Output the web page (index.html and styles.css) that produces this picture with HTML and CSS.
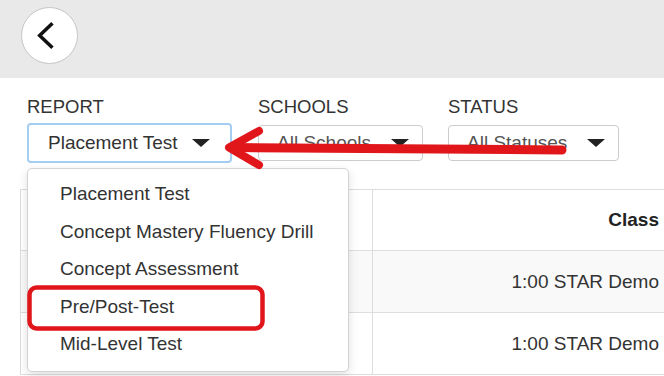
FILE: index.html
```html
<!DOCTYPE html>
<html lang="en">
<head>
    <meta charset="UTF-8">
    <title>Reports</title>
    <link rel="stylesheet" href="styles.css">
</head>
<body>
    <div class="top-bar">
        <button class="back-btn" aria-label="Back">
            <svg width="56" height="56" viewBox="0 0 56 56">
                <polyline points="31,15 18,27.5 31,40" fill="none" stroke="#111" stroke-width="3.6" stroke-linejoin="miter" stroke-linecap="butt"/>
            </svg>
        </button>
    </div>

    <div class="filters">
        <div class="filter filter-report">
            <div class="filter-label">REPORT</div>
            <div class="select select-open">
                <span>Placement Test</span>
                <i class="caret"></i>
            </div>
            <ul class="menu">
                <li>Placement Test</li>
                <li>Concept Mastery Fluency Drill</li>
                <li>Concept Assessment</li>
                <li>Pre/Post-Test</li>
                <li>Mid-Level Test</li>
            </ul>
        </div>
        <div class="filter filter-schools">
            <div class="filter-label">SCHOOLS</div>
            <div class="select">
                <span>All Schools</span>
                <i class="caret"></i>
            </div>
        </div>
        <div class="filter filter-status">
            <div class="filter-label">STATUS</div>
            <div class="select">
                <span>All Statuses</span>
                <i class="caret"></i>
            </div>
        </div>
    </div>

    <div class="table-wrap">
        <table class="results">
            <thead>
                <tr><th></th><th>Class</th></tr>
            </thead>
            <tbody>
                <tr class="striped"><td></td><td>1:00 STAR Demo</td></tr>
                <tr><td></td><td>1:00 STAR Demo</td></tr>
            </tbody>
        </table>
    </div>

    <!-- annotation layer -->
    <svg class="annotations" width="664" height="376" viewBox="0 0 664 376">
        <line x1="562" y1="150" x2="236" y2="147.5" stroke="#e0161b" stroke-width="9" stroke-linecap="round"/>
        <polyline points="259,131 229,147.5 259,165" fill="none" stroke="#e0161b" stroke-width="8" stroke-linecap="round" stroke-linejoin="round"/>
        <rect x="29.5" y="287.5" width="233" height="41" rx="7" fill="none" stroke="#e0161b" stroke-width="4.5"/>
    </svg>
</body>
</html>
```

FILE: styles.css
```css
body {
    margin: 0;
    width: 664px;
    height: 376px;
    overflow: hidden;
    position: relative;
    font-family: 'Liberation Sans', Arial, sans-serif;
    font-size: 19px;
    color: #333;
    background: #fff;
}

.top-bar {
    height: 78px;
    background: #e9e9e9;
    padding: 7px 0 0 21px;
    box-sizing: border-box;
}

.back-btn {
    width: 57px;
    height: 57px;
    padding: 0;
    border: 1.5px solid #c6c6c6;
    border-radius: 50%;
    background: #fff;
    display: flex;
    align-items: center;
    justify-content: center;
}

.filters {
    display: flex;
    padding: 18px 0 0 27px;
}

.filter {
    position: relative;
}

.filter-report {
    width: 205px;
    margin-right: 26px;
}

.filter-schools {
    width: 165px;
    margin-right: 25px;
}

.filter-status {
    width: 171px;
}

.filter-label {
    font-size: 18.5px;
    line-height: 22px;
    margin-bottom: 7px;
    color: #333;
}

.select {
    height: 36px;
    box-sizing: border-box;
    border: 1px solid #ccc;
    border-radius: 4px;
    display: flex;
    align-items: center;
    justify-content: space-between;
    padding: 0 13px 0 18px;
    color: #555;
    background: #fff;
    white-space: nowrap;
}

.select-open {
    height: 40px;
    margin-top: -2px;
    border: 2px solid #a3cdf3;
    padding: 0 20px 0 19px;
    color: #333;
}

.caret {
    flex: none;
    width: 0;
    height: 0;
    border-left: 9px solid transparent;
    border-right: 9px solid transparent;
    border-top: 8px solid #222;
}

.menu {
    position: absolute;
    top: 72px;
    left: 0;
    width: 322px;
    height: 204px;
    box-sizing: border-box;
    margin: 0;
    padding: 6px 0 0;
    list-style: none;
    background: #fff;
    border: 1px solid #d4d4d4;
    border-radius: 5px;
    box-shadow: 0 3px 10px rgba(0,0,0,0.13);
    z-index: 5;
}

.menu li {
    height: 37.5px;
    line-height: 37.5px;
    padding-left: 32px;
    color: #333;
    white-space: nowrap;
}

.table-wrap {
    padding-left: 20px;
    margin-top: 26px;
}

.results {
    border-collapse: collapse;
    width: 648px;
    table-layout: fixed;
}

.results th,
.results td {
    border: 1px solid #ddd;
    text-align: right;
    padding: 0;
    white-space: nowrap;
}

.results th {
    height: 60px;
    font-weight: bold;
    color: #222;
}

.results td {
    height: 61px;
    color: #333;
}

.results th:first-child,
.results td:first-child {
    width: 351px;
}

.results th:last-child,
.results td:last-child {
    border-right: none;
    padding-right: 9px;
}

.striped td {
    background: #f9f9f9;
}

.annotations {
    position: absolute;
    top: 0;
    left: 0;
    pointer-events: none;
    z-index: 10;
}
```
